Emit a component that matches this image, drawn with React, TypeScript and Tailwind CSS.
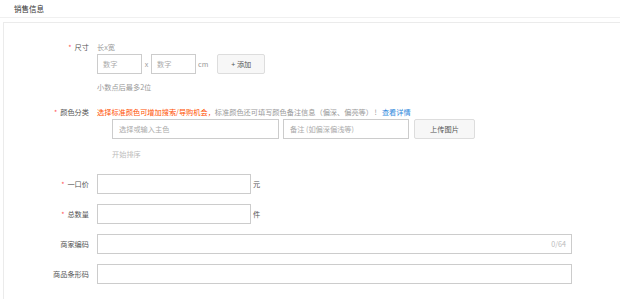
import React from "react";

const font = { fontFamily: '"Noto Sans CJK SC", "Noto Sans", sans-serif' };

function Label({ text, required }: { text: string; required?: boolean }) {
  return (
    <div className="flex items-center justify-end gap-[3px] text-[#555]">
      {required && <span className="text-[#f55] text-[7px]">*</span>}
      <span>{text}</span>
    </div>
  );
}

export default function App() {
  return (
    <div
      className="w-[620px] h-[299px] bg-white overflow-hidden text-[7.2px] leading-[12px]"
      style={font}
    >
      <div className="h-[18px] border-b border-[#f0f0f0] pl-[14px] flex items-center text-[#333] text-[7.5px]">
        销售信息
      </div>
      <div className="mt-[4px] ml-[3px] h-[300px] border-l border-t border-[#ebebeb] pt-[18px]">
        {/* Row 1: 尺寸 */}
        <div className="grid grid-cols-[85px_1fr] gap-x-[8px]">
          <div className="h-[12px]">
            <Label text="尺寸" required />
          </div>
          <div className="flex flex-col">
            <div className="h-[12px] text-[#999]">长x宽</div>
            <div className="mt-[1px] flex items-center h-[20px]">
              <div className="w-[45px] h-[20px] border border-[#ccc] flex items-center pl-[5px] text-[#aaa]">
                数字
              </div>
              <span className="w-[9px] text-center text-[#999]">x</span>
              <div className="w-[45px] h-[20px] border border-[#ccc] flex items-center pl-[5px] text-[#aaa]">
                数字
              </div>
              <span className="ml-[2px] text-[#999]">cm</span>
              <div className="ml-[9px] w-[48px] h-[20px] border border-[#ddd] bg-[#f7f7f7] rounded-[2px] flex items-center justify-center text-[#555]">
                + 添加
              </div>
            </div>
            <div className="mt-[7px] h-[12px] text-[#999]">小数点后最多2位</div>
          </div>
        </div>

        {/* Row 2: 颜色分类 */}
        <div className="mt-[13px] grid grid-cols-[85px_1fr] gap-x-[8px]">
          <div className="h-[12px]">
            <Label text="颜色分类" required />
          </div>
          <div className="flex flex-col">
            <div className="h-[12px] whitespace-nowrap">
              <span className="text-[#ff5000]">选择标准颜色可增加搜索/导购机会，</span>
              <span className="text-[#999]">标准颜色还可填写颜色备注信息（偏深、偏亮等） !</span>
              <span className="ml-[5px] text-[#3089dc]">查看详情</span>
            </div>
            <div className="mt-[1px] flex items-center h-[20px] pl-[15px]">
              <div className="w-[167px] h-[20px] border border-[#ccc] flex items-center pl-[6px] text-[#aaa]">
                选择或输入主色
              </div>
              <div className="ml-[4px] w-[126px] h-[20px] border border-[#ccc] flex items-center pl-[6px] text-[#aaa]">
                备注 (如偏深偏浅等)
              </div>
              <div className="ml-[5px] w-[61px] h-[20px] border border-[#ddd] bg-[#f7f7f7] rounded-[2px] flex items-center justify-center text-[#555]">
                上传图片
              </div>
            </div>
            <div className="mt-[9px] h-[12px] pl-[15px] text-[#bbb]">开始排序</div>
          </div>
        </div>

        {/* Row 3: 一口价 */}
        <div className="mt-[14px] grid grid-cols-[85px_1fr] gap-x-[8px] items-center">
          <Label text="一口价" required />
          <div className="flex items-center">
            <div className="w-[154px] h-[20px] border border-[#ccc]" />
            <span className="ml-[2px] text-[#555]">元</span>
          </div>
        </div>

        {/* Row 4: 总数量 */}
        <div className="mt-[10px] grid grid-cols-[85px_1fr] gap-x-[8px] items-center">
          <Label text="总数量" required />
          <div className="flex items-center">
            <div className="w-[154px] h-[20px] border border-[#ccc]" />
            <span className="ml-[2px] text-[#555]">件</span>
          </div>
        </div>

        {/* Row 5: 商家编码 */}
        <div className="mt-[10px] grid grid-cols-[85px_1fr] gap-x-[8px] items-center">
          <Label text="商家编码" />
          <div className="w-[475px] h-[20px] border border-[#ccc] flex items-center justify-end pr-[5px] text-[#bbb]">
            0/64
          </div>
        </div>

        {/* Row 6: 商品条形码 */}
        <div className="mt-[10px] grid grid-cols-[85px_1fr] gap-x-[8px] items-center">
          <Label text="商品条形码" />
          <div className="w-[475px] h-[20px] border border-[#ccc]" />
        </div>
      </div>
    </div>
  );
}
